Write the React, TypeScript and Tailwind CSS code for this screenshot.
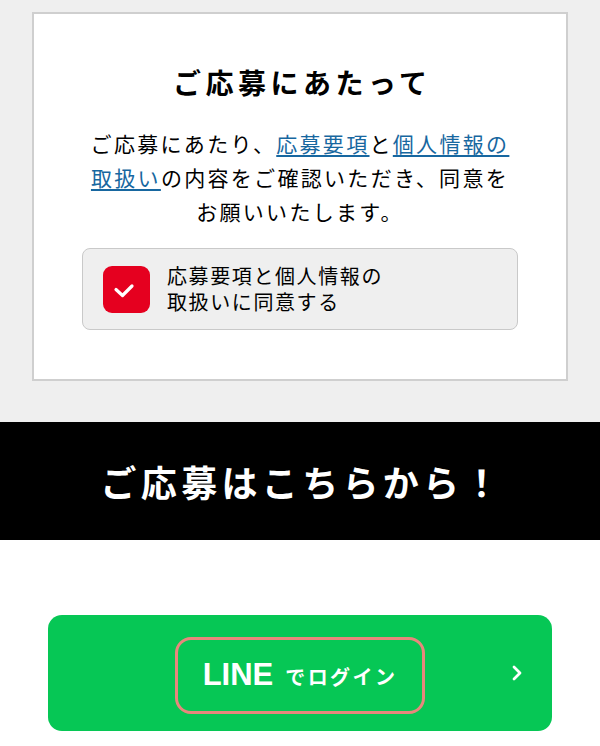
export default function App() {
  const jp = { fontFamily: '"Noto Sans CJK JP", "Noto Sans", sans-serif' };

  return (
    <div className="w-[600px] h-[746px] bg-white overflow-hidden text-black" style={jp}>
      {/* agreement section */}
      <div className="bg-[#efefef] px-8 pt-3 pb-[41px]">
        <div className="bg-white border-2 border-[#cfcfcf] pt-[50px] pb-[49px]">
          <h2 className="text-center text-[28px] leading-[36px] font-bold tracking-[0.16em] pl-[0.16em]">
            ご応募にあたって
          </h2>
          <p className="mt-[26px] text-center text-[21px] leading-[34px] tracking-[0.11em]">
            ご応募にあたり、
            <a href="#" className="text-[#1767a0] underline underline-offset-[3px]">
              応募要項
            </a>
            と
            <a href="#" className="text-[#1767a0] underline underline-offset-[3px]">
              個人情報の
              <br />
              取扱い
            </a>
            の内容をご確認いただき、同意を
            <br />
            お願いいたします。
          </p>
          <label className="mt-5 mx-[48px] h-[82px] flex items-center gap-[17px] px-5 bg-[#efefef] border-[1.5px] border-[#c9c9c9] rounded-lg cursor-pointer">
            <span className="w-[47px] h-[47px] shrink-0 rounded-[9px] bg-[#e5001f] flex items-center justify-center">
              <svg width="47" height="47" viewBox="0 0 47 47" fill="none">
                <path
                  d="M13 23.5 L19.5 29.5 L29 20"
                  stroke="white"
                  strokeWidth="3.2"
                  strokeLinecap="round"
                  strokeLinejoin="round"
                />
              </svg>
            </span>
            <span className="text-[20px] leading-[26px] tracking-[0.08em]">
              応募要項と個人情報の
              <br />
              取扱いに同意する
            </span>
          </label>
        </div>
      </div>

      {/* heading band */}
      <div className="bg-black h-[118px] flex items-center justify-center">
        <h2 className="text-white text-[36px] font-bold tracking-[0.12em] pl-[0.12em]">
          ご応募はこちらから！
        </h2>
      </div>

      {/* LINE login button */}
      <div className="px-12 pt-[75px]">
        <button className="relative w-full h-[116px] rounded-[14px] bg-[#06c755] flex items-center justify-center text-white">
          <span className="mt-[5px] h-[77px] px-[25px] flex items-center gap-3 border-[3px] border-[#e8877c] rounded-[16px]">
            <span
              className="text-[31px] font-bold"
              style={{ fontFamily: '"Liberation Sans", Arial, sans-serif' }}
            >
              LINE
            </span>
            <span className="text-[20px] font-bold tracking-[0.12em] mt-[3px]">でログイン</span>
          </span>
          <svg
            className="absolute right-[28px] top-1/2 -translate-y-1/2"
            width="14"
            height="18"
            viewBox="0 0 14 18"
            fill="none"
          >
            <path
              d="M4 3 L10 9 L4 15"
              stroke="white"
              strokeWidth="2.8"
              strokeLinecap="round"
              strokeLinejoin="round"
            />
          </svg>
        </button>
      </div>
    </div>
  );
}
